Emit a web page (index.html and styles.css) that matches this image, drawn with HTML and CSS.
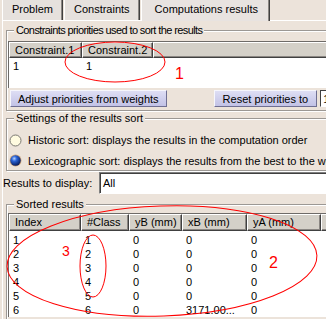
FILE: index.html
```html
<!DOCTYPE html>
<html lang="en">
<head>
    <meta charset="UTF-8">
    <meta name="viewport" content="width=device-width, initial-scale=1.0">
    <title>Computations results</title>
    <link rel="stylesheet" href="styles.css">
</head>
<body>
    <div class="window">
        <div class="tabs">
            <div class="tab">Problem</div>
            <div class="tab">Constraints</div>
            <div class="tab active">Computations results</div>
        </div>

        <div class="panel">
            <div class="group first">
                <div class="group-title tight">Constraints priorities used to sort the results</div>
                <div class="grid priorities">
                    <div class="row head">
                        <div class="hcell">Constraint.1</div>
                        <div class="hcell">Constraint.2</div>
                        <div class="hcell"></div>
                    </div>
                    <div class="body">
                        <div class="row">
                            <div class="cell">1</div>
                            <div class="cell">1</div>
                            <div class="cell"></div>
                        </div>
                    </div>
                </div>
                <div class="actions">
                    <button class="btn">Adjust priorities from weights</button>
                    <button class="btn reset">Reset priorities to</button>
                    <input class="num" value="1">
                </div>
            </div>

            <div class="group second">
                <div class="group-title">Settings of the results sort</div>
                <div class="option top">
                    <svg width="13" height="13" viewBox="0 0 13 13">
                        <circle cx="6.5" cy="6.5" r="5.5" fill="#fffbe0" stroke="#7a7872"/>
                    </svg>
                    <span>Historic sort: displays the results in the computation order</span>
                </div>
                <div class="option">
                    <svg width="13" height="13" viewBox="0 0 13 13">
                        <defs>
                            <radialGradient id="ball" cx="0.38" cy="0.32" r="0.7">
                                <stop offset="0" stop-color="#b8d4ff"/>
                                <stop offset="0.35" stop-color="#2a64d8"/>
                                <stop offset="1" stop-color="#071a5a"/>
                            </radialGradient>
                        </defs>
                        <circle cx="6.5" cy="6.5" r="6" fill="#c9a27a"/>
                        <circle cx="6.5" cy="6.5" r="5.2" fill="url(#ball)"/>
                    </svg>
                    <span>Lexicographic sort: displays the results from the best to the worst</span>
                </div>
            </div>

            <div class="display">
                <span>Results to display:</span>
                <div class="combo">All</div>
            </div>

            <div class="group third">
                <div class="group-title">Sorted results</div>
                <div class="grid results">
                    <div class="row head">
                        <div class="hcell">Index</div>
                        <div class="hcell">#Class</div>
                        <div class="hcell">yB (mm)</div>
                        <div class="hcell">xB (mm)</div>
                        <div class="hcell">yA (mm)</div>
                        <div class="hcell"></div>
                    </div>
                    <div class="body">
                        <div class="row"><div class="cell">1</div><div class="cell">1</div><div class="cell">0</div><div class="cell">0</div><div class="cell">0</div><div class="cell"></div></div>
                        <div class="row"><div class="cell">2</div><div class="cell">2</div><div class="cell">0</div><div class="cell">0</div><div class="cell">0</div><div class="cell"></div></div>
                        <div class="row"><div class="cell">3</div><div class="cell">3</div><div class="cell">0</div><div class="cell">0</div><div class="cell">0</div><div class="cell"></div></div>
                        <div class="row"><div class="cell">4</div><div class="cell">4</div><div class="cell">0</div><div class="cell">0</div><div class="cell">0</div><div class="cell"></div></div>
                        <div class="row"><div class="cell">5</div><div class="cell">5</div><div class="cell">0</div><div class="cell">0</div><div class="cell">0</div><div class="cell"></div></div>
                        <div class="row"><div class="cell">6</div><div class="cell">6</div><div class="cell">0</div><div class="cell">3171.00...</div><div class="cell">0</div><div class="cell"></div></div>
                    </div>
                </div>
            </div>
        </div>

        <!-- hand-drawn annotations over the dialog -->
        <svg class="marks" width="326" height="319" viewBox="0 0 326 319">
            <g fill="none" stroke="#ff0000" stroke-width="1">
                <ellipse cx="115" cy="62" rx="50" ry="20"/>
                <ellipse cx="162" cy="261" rx="155" ry="55" transform="rotate(-2 162 261)"/>
                <ellipse cx="93" cy="266" rx="13" ry="31"/>
            </g>
            <g fill="#ff0000" font-family="Liberation Sans, Arial, sans-serif">
                <text x="175" y="79" font-size="16">1</text>
                <text x="269" y="268" font-size="16">2</text>
                <text x="62" y="256" font-size="14">3</text>
            </g>
        </svg>
    </div>
</body>
</html>
```

FILE: styles.css
```css
body {
    margin: 0;
    font-family: 'Liberation Sans', Arial, sans-serif;
    font-size: 11px;
    color: #000;
    background: #ece3da;
    overflow: hidden;
}

.window {
    position: relative;
    width: 420px;
    height: 319px;
    padding-left: 2px;
}

/* tab strip */
.tabs {
    display: flex;
    height: 20px;
}

.tab {
    padding: 0 9px;
    line-height: 19px;
    white-space: nowrap;
    background: #e6e1dd;
    border-left: 1px solid #fff;
    border-right: 1px solid #404040;
    box-shadow: inset -1px 0 #8a8682;
    margin-right: 1px;
}

.tab.active {
    height: 21px;
    padding: 0 11px 0 13px;
    position: relative;
    z-index: 1;
    background: #e8e3e0;
    margin-right: 0;
}

.panel {
    border-top: 1px solid #fff;
    border-left: 1px solid #fff;
    height: 300px;
}

/* etched group frames */
.group {
    margin-left: 3px;
    padding: 0 0 3px 1px;
    border: 1px solid #9c9894;
    box-shadow: inset 1px 1px #fff, 1px 1px #fff;
}

.group-title {
    width: fit-content;
    margin: -7px 0 0 6px;
    padding: 0 2px;
    line-height: 13px;
    white-space: nowrap;
    background: #ece3da;
}

.group-title.tight {
    letter-spacing: -0.6px;
}

.group.first {
    margin-top: 9px;
}

.group.first .grid {
    margin-top: 4px;
}

.group.second {
    margin-top: 7px;
    padding-bottom: 0;
}

.option.top {
    margin-top: 5px;
}

.group.third {
    margin-top: 10px;
}

.group.third .grid {
    margin-top: 2px;
}

/* list tables */
.grid {
    border-top: 1px solid #6e6b68;
    border-left: 1px solid #6e6b68;
    background: #fff;
}

.row {
    display: grid;
}

.priorities .row {
    grid-template-columns: 73px 71px 1fr;
}

.results .row {
    grid-template-columns: 72px 48px 53px 65px 74px 1fr;
}

.hcell {
    box-sizing: border-box;
    height: 16px;
    line-height: 14px;
    padding-left: 5px;
    background: #d4d0c8;
    border: 1px solid;
    border-color: #fff #404040 #404040 #fff;
    box-shadow: inset -1px -1px #8a8682;
    white-space: nowrap;
}

.results .hcell {
    height: 17px;
    line-height: 15px;
}

.cell {
    padding-left: 4px;
    white-space: nowrap;
}

.priorities .body {
    height: 30px;
}

.priorities .cell {
    line-height: 16px;
}

.results .body {
    padding-top: 2px;
}

.results .cell {
    line-height: 14px;
}

/* buttons under the priorities */
.actions {
    display: flex;
    margin-top: 2px;
    height: 17px;
}

.btn {
    flex-shrink: 0;
    font: inherit;
    white-space: nowrap;
    height: 17px;
    margin: 0 0 0 2px;
    padding: 0 7px;
    line-height: 14px;
    background: linear-gradient(#dedef4, #c2c2e6);
    border: 1px solid;
    border-color: #f6f6fc #6f6f92 #6f6f92 #f6f6fc;
    color: #000;
}

.btn.reset {
    margin-left: 47px;
    padding: 0 8px;
}

.num {
    flex-shrink: 0;
    font: inherit;
    box-sizing: border-box;
    width: 30px;
    height: 17px;
    margin-left: 3px;
    padding: 0 2px;
    border: 1px solid;
    border-color: #404040 #fff #fff #404040;
    background: #fff;
}

/* sort settings */
.option {
    display: flex;
    align-items: center;
    gap: 6px;
    height: 20px;
    padding-left: 1px;
    white-space: nowrap;
}

.option svg {
    flex-shrink: 0;
}

.option + .option {
    height: 19px;
    margin-top: 1px;
}

.display {
    display: flex;
    align-items: center;
    margin-top: 1px;
    height: 22px;
    width: 340px;
}

.display span {
    width: 96px;
    white-space: nowrap;
}

.combo {
    flex: 1;
    box-sizing: border-box;
    height: 22px;
    line-height: 20px;
    padding-left: 3px;
    background: #fff;
    border: 1px solid;
    border-color: #808080 #fff #fff #808080;
    box-shadow: inset 1px 1px #404040;
}

.marks {
    position: absolute;
    left: 0;
    top: 0;
    pointer-events: none;
}
```
